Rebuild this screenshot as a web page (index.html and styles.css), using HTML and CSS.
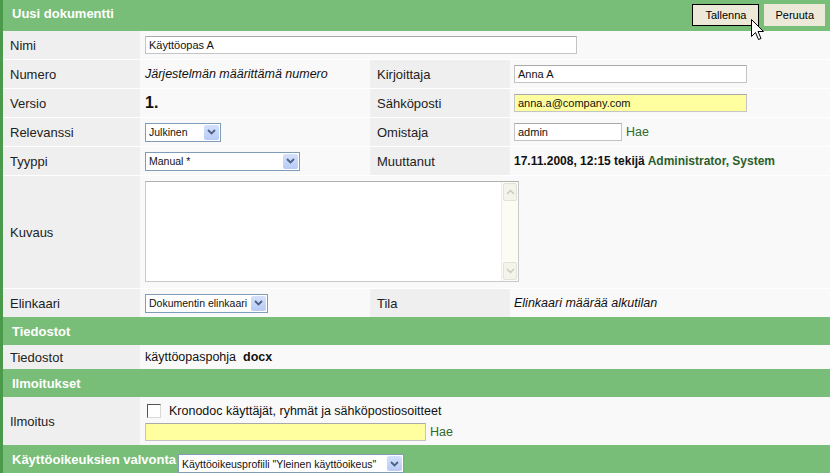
FILE: index.html
```html
<!DOCTYPE html>
<html lang="fi">
  <head>
    <meta charset="UTF-8" />
    <title>Uusi dokumentti</title>
    <link rel="stylesheet" href="styles.css">
  </head>
  <body>
    <div class="doc">
      <!-- Header -->
      <div class="head">
        <h1>Uusi dokumentti</h1>
        <div class="actions">
          <button class="btn btn-focus" type="button">Tallenna</button>
          <button class="btn" type="button">Peruuta</button>
        </div>
      </div>

      <!-- Perustiedot -->
      <div class="row">
        <div class="lbl">Nimi</div>
        <div class="val span3"><input class="inp w-name" type="text" value="Käyttöopas A" /></div>
      </div>
      <div class="row">
        <div class="lbl">Numero</div>
        <div class="val"><em>Järjestelmän määrittämä numero</em></div>
        <div class="lbl">Kirjoittaja</div>
        <div class="val val-r"><input class="inp w-right" type="text" value="Anna A" /></div>
      </div>
      <div class="row">
        <div class="lbl">Versio</div>
        <div class="val"><span class="version">1.</span></div>
        <div class="lbl">Sähköposti</div>
        <div class="val val-r"><input class="inp inp-yellow w-right" type="text" value="anna.a@company.com" /></div>
      </div>
      <div class="row">
        <div class="lbl">Relevanssi</div>
        <div class="val">
          <span class="sel w-rel">
            <select><option>Julkinen</option></select>
            <span class="sel-btn"><svg width="9" height="6" viewBox="0 0 9 6"><path d="M1 1l3.5 3.5L8 1" fill="none" stroke="#4d6185" stroke-width="1.8"/></svg></span>
          </span>
        </div>
        <div class="lbl">Omistaja</div>
        <div class="val val-r"><input class="inp w-owner" type="text" value="admin" /><a class="link" href="#">Hae</a></div>
      </div>
      <div class="row">
        <div class="lbl">Tyyppi</div>
        <div class="val">
          <span class="sel w-type">
            <select><option>Manual *</option></select>
            <span class="sel-btn"><svg width="9" height="6" viewBox="0 0 9 6"><path d="M1 1l3.5 3.5L8 1" fill="none" stroke="#4d6185" stroke-width="1.8"/></svg></span>
          </span>
        </div>
        <div class="lbl">Muuttanut</div>
        <div class="val val-r"><b class="changed">17.11.2008, 12:15 tekijä <span class="who">Administrator, System</span></b></div>
      </div>
      <div class="row row-tall">
        <div class="lbl">Kuvaus</div>
        <div class="val span3 val-top">
          <div class="desc">
            <textarea></textarea>
            <div class="vscroll">
              <span class="vs-btn"><svg width="9" height="6" viewBox="0 0 9 6"><path d="M1 5l3.5-3.5L8 5" fill="none" stroke="#c8c8bc" stroke-width="1.4"/></svg></span>
              <span class="vs-btn"><svg width="9" height="6" viewBox="0 0 9 6"><path d="M1 1l3.5 3.5L8 1" fill="none" stroke="#c8c8bc" stroke-width="1.4"/></svg></span>
            </div>
          </div>
        </div>
      </div>
      <div class="row row-last">
        <div class="lbl">Elinkaari</div>
        <div class="val">
          <span class="sel w-life">
            <select><option>Dokumentin elinkaari</option></select>
            <span class="sel-btn"><svg width="9" height="6" viewBox="0 0 9 6"><path d="M1 1l3.5 3.5L8 1" fill="none" stroke="#4d6185" stroke-width="1.8"/></svg></span>
          </span>
        </div>
        <div class="lbl">Tila</div>
        <div class="val val-r"><em>Elinkaari määrää alkutilan</em></div>
      </div>

      <!-- Tiedostot -->
      <div class="section">Tiedostot</div>
      <div class="row row-file">
        <div class="lbl">Tiedostot</div>
        <div class="val span3">käyttöopaspohja&nbsp;&nbsp;<b>docx</b></div>
      </div>

      <!-- Ilmoitukset -->
      <div class="section">Ilmoitukset</div>
      <div class="row row-notify">
        <div class="lbl">Ilmoitus</div>
        <div class="val span3 val-stack">
          <label class="check"><span class="box"></span>Kronodoc käyttäjät, ryhmät ja sähköpostiosoitteet</label>
          <div><input class="inp inp-yellow w-notify" type="text" value="" /><a class="link" href="#">Hae</a></div>
        </div>
      </div>

      <!-- Käyttöoikeudet -->
      <div class="section section-rights">
        <span>Käyttöoikeuksien valvonta</span>
        <span class="sel w-rights">
          <select><option>Käyttöoikeusprofiili "Yleinen käyttöoikeus"</option></select>
          <span class="sel-btn"><svg width="9" height="6" viewBox="0 0 9 6"><path d="M1 1l3.5 3.5L8 1" fill="none" stroke="#4d6185" stroke-width="1.8"/></svg></span>
        </span>
      </div>

      <!-- Mouse pointer over the save button -->
      <svg class="cursor" width="13" height="22" viewBox="0 0 13 22">
        <path d="M0.5 0.5v17l4-4 3 7 2.5-1-3-7h5.5z" fill="#fff" stroke="#000" stroke-width="1"/>
      </svg>
    </div>
  </body>
</html>
```

FILE: styles.css
```css
body {
  margin: 0;
  padding: 0;
  background-color: #ffffff;
  font-family: "Liberation Sans", Arial, sans-serif;
  font-size: 12.5px;
  color: #111;
}
.doc {
  position: relative;
  width: 827px;
  border-left: 3px solid #4b9a4b;
}
.head {
  display: flex;
  justify-content: space-between;
  align-items: flex-start;
  height: 31px;
  background-color: #78bd78; /* green bar */
}
.head h1 {
  margin: 0;
  padding: 6px 0 0 9px;
  font-size: 13px;
  font-weight: bold;
  color: #ffffff;
}
.actions {
  display: flex;
  gap: 5px;
  padding: 4px 5px 0 0;
}
.btn {
  height: 22px;
  padding: 0 10px;
  background-color: #ece9d8;
  border: 1px solid #ece9d8;
  font-family: "Liberation Sans", Arial, sans-serif;
  font-size: 11px;
  color: #000;
}
.btn-focus {
  width: 67px;
  border: 1px solid #000;
}
.row {
  display: grid;
  grid-template-columns: 137px 230px 140px 1fr;
  height: 28px;
  border-bottom: 1px solid #ffffff;
}
.row-tall {
  height: 112px;
}
.row-last {
  border-bottom: none;
}
.row-file {
  height: 24px;
  border-bottom: none;
}
.row-notify {
  height: 48px;
  border-bottom: none;
}
.lbl {
  display: flex;
  align-items: center;
  padding: 0 7px;
  background-color: #efefef;
  color: #222;
  font-size: 13px;
}
.val {
  display: flex;
  align-items: center;
  padding: 0 5px;
  background-color: #f9f9f9;
  white-space: nowrap;
}
.val-r {
  padding-left: 4px;
}
.val-top {
  align-items: flex-start;
  padding-top: 5px;
}
.val-stack {
  flex-direction: column;
  align-items: flex-start;
  justify-content: center;
  gap: 5px;
  padding-top: 3px;
}
.span3 {
  grid-column: 2 / 5;
}
.version {
  font-size: 16px;
  font-weight: bold;
}
.changed {
  font-size: 12px;
}
.who {
  color: #2b5f2b;
}
.inp {
  height: 18px;
  box-sizing: border-box;
  padding: 1px 3px;
  border: 1px solid #c4c4c4;
  border-top-color: #a9a9a9;
  background-color: #ffffff;
  font-family: "Liberation Sans", Arial, sans-serif;
  font-size: 11px;
  color: #111;
}
.inp-yellow {
  background-color: #ffff9f;
}
.w-name { width: 432px; }
.w-right { width: 233px; }
.w-owner { width: 108px; }
.w-notify { width: 281px; }
.link {
  margin-left: 4px;
  color: #2f6a2f;
  text-decoration: none;
  font-size: 12.5px;
}
.sel {
  position: relative;
  display: inline-block;
  height: 19px;
}
.sel select {
  -webkit-appearance: none;
  appearance: none;
  width: 100%;
  height: 19px;
  box-sizing: border-box;
  padding: 0 16px 0 3px;
  border: 1px solid #7f9db9;
  border-radius: 0;
  background-color: #ffffff;
  font-family: "Liberation Sans", Arial, sans-serif;
  font-size: 10.5px;
  color: #111;
}
.sel-btn {
  position: absolute;
  top: 2px;
  right: 2px;
  width: 15px;
  height: 15px;
  display: flex;
  align-items: center;
  justify-content: center;
  background: linear-gradient(#d4e1fc, #b8cbf5);
  border-radius: 2px;
}
.w-rel { width: 76px; }
.w-type { width: 155px; }
.w-life { width: 123px; }
.w-rights { width: 226px; }
.desc {
  display: flex;
  width: 374px;
  height: 101px;
  box-sizing: border-box;
  border: 1px solid #c9c9c9;
  border-top-color: #b0b0b0;
  background-color: #ffffff;
}
.desc textarea {
  flex: 1;
  border: none;
  resize: none;
  outline: none;
  background: transparent;
}
.vscroll {
  display: flex;
  flex-direction: column;
  justify-content: space-between;
  width: 16px;
  background-color: #fcfcf5;
  border-left: 1px solid #eeeee4;
}
.vs-btn {
  display: flex;
  align-items: center;
  justify-content: center;
  height: 16px;
  margin: 1px;
  background-color: #f4f4ea;
  border: 1px solid #e2e2d8;
  border-radius: 2px;
}
.check {
  display: flex;
  align-items: center;
  color: #111;
}
.box {
  width: 12px;
  height: 12px;
  margin: 0 8px 0 2px;
  border: 1px solid #555;
  border-right-color: #d8d8d8;
  border-bottom-color: #d8d8d8;
  background-color: #ffffff;
}
.section {
  display: flex;
  align-items: center;
  height: 28px;
  padding-left: 9px;
  background-color: #78bd78;
  color: #ffffff;
  font-size: 13px;
  font-weight: bold;
}
.section-rights {
  align-items: flex-end;
  gap: 2px;
}
.section-rights > span:first-child {
  align-self: center;
}
.cursor {
  position: absolute;
  top: 19px;
  left: 748px;
}
```
